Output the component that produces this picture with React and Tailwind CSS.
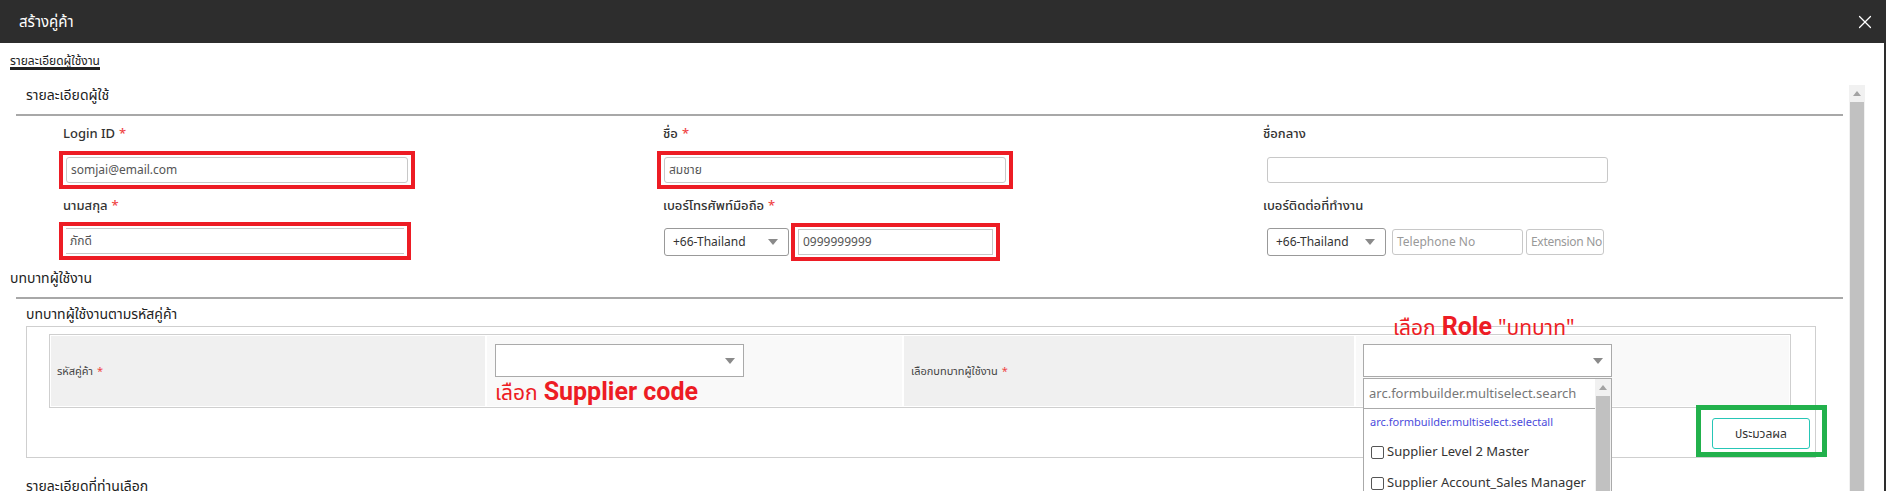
import { X } from "lucide-react";

// red annotation frame drawn over a field
const RedBox = ({ children, className = "" }) => (
  <div className={`relative ${className}`}>
    {children}
    <span className="pointer-events-none absolute inset-x-[-7px] inset-y-[-6px] border-4 border-[#ed1c24]" />
  </div>
);

const Label = ({ children, required }) => (
  <div className="h-[20px] leading-[20px] text-[13px] font-medium text-[#333]">
    {children}
    {required && <span className="ml-1 text-[#ef4444]">*</span>}
  </div>
);

const TextInput = ({ value, placeholder, className = "" }) => (
  <div
    className={`flex h-[26px] items-center overflow-hidden whitespace-nowrap rounded-[3px] border border-[#c8c8c8] bg-white px-[4px] text-[12px] ${
      value ? "text-[#555]" : "text-[#999]"
    } ${className}`}
  >
    {value || placeholder}
  </div>
);

const Caret = () => (
  <svg width="10" height="6" viewBox="0 0 10 6" className="shrink-0">
    <path d="M0 0h10L5 6z" fill="#8a8a8a" />
  </svg>
);

const CountrySelect = ({ className = "" }) => (
  <div
    className={`flex h-[28px] items-center justify-between rounded-[3px] border border-[#999] bg-white pl-[8px] pr-[10px] text-[12px] text-[#333] ${className}`}
  >
    <span>+66-Thailand</span>
    <Caret />
  </div>
);

const SquareSelect = () => (
  <div className="flex h-[33px] w-[249px] items-center justify-end border border-[#aaa] bg-white pr-[8px]">
    <Caret />
  </div>
);

const ScrollUp = () => (
  <svg width="8" height="5" viewBox="0 0 8 5">
    <path d="M0 5h8L4 0z" fill="#a3a3a3" />
  </svg>
);

const roleOptions = ["Supplier Level 2 Master", "Supplier Account_Sales Manager", "Supplier Admin"];

export default function App() {
  return (
    <div className="h-[491px] w-[1886px] overflow-hidden bg-white font-['Noto_Sans','Noto_Sans_Thai',sans-serif] text-[#333]">
      {/* Header */}
      <div className="flex h-[43px] items-center justify-between bg-[#2d2d2d] pl-[19px] pr-[10px]">
        <span className="text-[15px] text-white">สร้างคู่ค้า</span>
        <X size={22} strokeWidth={1.3} className="text-white" />
      </div>

      <div className="flex h-[448px] flex-col border-r-2 border-[#2d2d2d]">
        {/* Tab strip */}
        <div className="flex h-[39px] items-start pl-[10px] pt-[11px]">
          <div className="h-[16px] border-b-[3px] border-[#222] text-[12px] leading-[13px] text-[#222]">
            รายละเอียดผู้ใช้งาน
          </div>
        </div>

        <div className="flex min-h-0 flex-1">
          {/* Scrollable content */}
          <div className="w-[1849px] shrink-0">
            <div className="h-[26px] pl-[26px] text-[14px] leading-[26px] text-[#222]">รายละเอียดผู้ใช้</div>
            <div className="ml-[16px] mr-[6px] mt-[6px] h-[2px] bg-[#a8a8a8]" />

            {/* User details form */}
            <div className="grid grid-cols-[600px_600px_600px] gap-y-[12px] pl-[63px] pt-[7px]">
              <div>
                <Label required>Login ID</Label>
                <RedBox className="ml-[3px] mt-[14px] w-[342px]">
                  <TextInput value="somjai@email.com" />
                </RedBox>
              </div>
              <div>
                <Label required>ชื่อ</Label>
                <RedBox className="ml-[1px] mt-[14px] w-[342px]">
                  <TextInput value="สมชาย" />
                </RedBox>
              </div>
              <div>
                <Label>ชื่อกลาง</Label>
                <TextInput className="ml-[4px] mt-[14px] w-[341px]" />
              </div>

              <div>
                <Label required>นามสกุล</Label>
                <RedBox className="ml-[3px] mt-[13px] w-[338px]">
                  <TextInput value="ภักดี" className="rounded-none border-x-0 px-0" />
                </RedBox>
              </div>
              <div>
                <Label required>เบอร์โทรศัพท์มือถือ</Label>
                <div className="ml-[1px] mt-[13px] flex items-center gap-[9px]">
                  <CountrySelect className="w-[125px]" />
                  <RedBox className="w-[195px]">
                    <TextInput value="0999999999" className="rounded-none px-[1px] text-[#444]" />
                  </RedBox>
                </div>
              </div>
              <div>
                <Label>เบอร์ติดต่อที่ทำงาน</Label>
                <div className="ml-[4px] mt-[13px] flex items-center">
                  <CountrySelect className="w-[119px]" />
                  <TextInput placeholder="Telephone No" className="ml-[6px] w-[131px] px-[2px]" />
                  <TextInput
                    placeholder="Extension No"
                    className="ml-[3px] w-[78px] px-[1px] text-[11px] tracking-[-0.3px]"
                  />
                </div>
              </div>
            </div>

            {/* Roles */}
            <div className="mt-[12px] h-[20px] pl-[10px] text-[14px] leading-[20px] text-[#222]">บทบาทผู้ใช้งาน</div>
            <div className="ml-[16px] mr-[6px] mt-[9px] h-[2px] bg-[#a8a8a8]" />
            <div className="mt-[5px] h-[20px] pl-[26px] text-[14px] leading-[20px] text-[#222]">
              บทบาทผู้ใช้งานตามรหัสคู่ค้า
            </div>

            <div className="ml-[26px] mt-[2px] w-[1790px] border border-[#cfcfcf] pb-[8px] pl-[22px] pr-[24px] pt-[7px]">
              <div className="flex h-[74px] gap-[2px] border border-[#cfcfcf] p-[1px]">
                <div className="flex w-[434px] items-center bg-[#f0f0f0] pl-[6px] text-[11px] text-[#444]">
                  รหัสคู่ค้า<span className="ml-1 text-[#ef4444]">*</span>
                </div>
                <div className="w-[415px] bg-[#f9f9f9] pl-[8px] pt-[8px]">
                  <SquareSelect />
                  <div className="mt-[2px] flex items-baseline gap-[6px] leading-[26px] text-[#ed1c24]">
                    <span className="text-[21px]">เลือก</span>
                    <span className="font-['Liberation_Sans_Narrow','Roboto',sans-serif] text-[25px] font-bold">
                      Supplier code
                    </span>
                  </div>
                </div>
                <div className="flex w-[450px] items-center bg-[#f0f0f0] pl-[7px] text-[11px] text-[#444]">
                  เลือกบทบาทผู้ใช้งาน<span className="ml-1 text-[#ef4444]">*</span>
                </div>
                <div className="flex-1 bg-[#f9f9f9] pl-[7px] pt-[8px]">
                  <div className="relative w-[249px]">
                    <div className="absolute left-[30px] top-[-30px] flex items-baseline gap-[6px] whitespace-nowrap leading-[26px] text-[#ed1c24]">
                      <span className="text-[21px]">เลือก</span>
                      <span className="font-['Liberation_Sans_Narrow','Roboto',sans-serif] text-[25px] font-bold">Role</span>
                      <span className="text-[21px]">"บทบาท"</span>
                    </div>
                    <SquareSelect />
                    {/* open multiselect dropdown */}
                    <div className="absolute left-0 top-[34px] z-10 flex h-[140px] w-[249px] border border-[#aaa] bg-white">
                      <div className="flex-1">
                        <div className="flex h-[30px] items-center border-b border-[#aaa] pl-[5px] text-[13px] text-[#777]">
                          arc.formbuilder.multiselect.search
                        </div>
                        <div className="pl-[6px] pt-[5px] text-[11px] leading-[16px] text-[#4b4bdc]">
                          arc.formbuilder.multiselect.selectall
                        </div>
                        <div className="flex flex-col gap-[13px] pl-[7px] pt-[13px]">
                          {roleOptions.map((opt) => (
                            <div key={opt} className="flex h-[18px] items-center gap-[3px] text-[13px] text-[#333]">
                              <span className="h-[13px] w-[13px] rounded-[2px] border border-[#555] bg-white" />
                              <span className="whitespace-nowrap">{opt}</span>
                            </div>
                          ))}
                        </div>
                      </div>
                      <div className="flex w-[16px] flex-col bg-[#f1f1f1]">
                        <div className="flex h-[17px] items-center justify-center">
                          <ScrollUp />
                        </div>
                        <div className="mx-[1px] flex-1 bg-[#c1c1c1]" />
                      </div>
                    </div>
                  </div>
                </div>
              </div>

              <div className="mr-[-19px] mt-[10px] flex justify-end">
                <div className="relative">
                  <button className="h-[31px] w-[98px] rounded-[3px] border border-[#26c6b6] bg-white text-[12px] text-[#333]">
                    ประมวลผล
                  </button>
                  <span className="pointer-events-none absolute bottom-[-8px] left-[-16px] right-[-17px] top-[-13px] border-[5px] border-[#22b14c]" />
                </div>
              </div>
            </div>

            <div className="mt-[18px] h-[20px] pl-[26px] text-[14px] leading-[20px] text-[#222]">
              รายละเอียดที่ท่านเลือก
            </div>
          </div>

          {/* Main scrollbar */}
          <div className="mt-[3px] flex w-[16px] flex-col bg-[#f1f1f1]">
            <div className="flex h-[17px] items-center justify-center">
              <ScrollUp />
            </div>
            <div className="mx-[1px] flex-1 bg-[#c1c1c1]" />
          </div>
        </div>
      </div>
    </div>
  );
}
